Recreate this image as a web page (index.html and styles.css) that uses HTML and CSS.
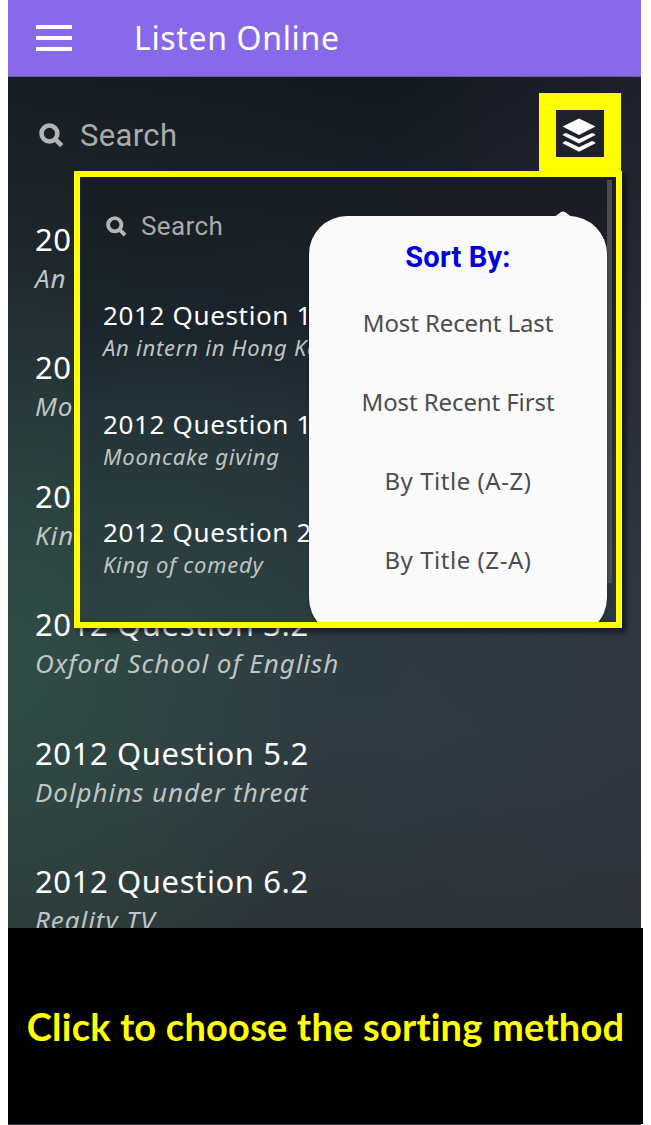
FILE: index.html
```html
<!DOCTYPE html>
<html lang="en">
<head>
<meta charset="utf-8">
<title>Listen Online</title>
<link rel="stylesheet" href="styles.css">
</head>
<body>
<main class="page">
  <section class="phone">
    <header class="topbar">
      <div class="menu"><span></span><span></span><span></span></div>
      <h1>Listen Online</h1>
    </header>
    <div class="search">
      <svg class="lens" viewBox="0 0 24 24"><circle cx="10" cy="10" r="7.6"/><path d="M15.5 15.5L21.8 21.8"/></svg>
      <span class="search-text">Search</span>
    </div>
    <ul class="list">
      <li><h2>2012 Question 1.1</h2><p>An intern in Hong Kong</p></li>
      <li><h2>2012 Question 1.2</h2><p>Mooncake giving</p></li>
      <li><h2>2012 Question 2.2</h2><p>King of comedy</p></li>
      <li><h2>2012 Question 3.2</h2><p>Oxford School of English</p></li>
      <li><h2>2012 Question 5.2</h2><p>Dolphins under threat</p></li>
      <li><h2>2012 Question 6.2</h2><p>Reality TV</p></li>
    </ul>
    <div class="sort-button">
      <svg class="layers" viewBox="0 0 34 34"><path d="M17 0.5L33.5 8.5L17 17L0.5 8.5Z"/><path d="M0.5 17Q0.5 16 4 14.9L17 21L30 14.9Q33.5 16 33.5 17L17 25.5Z"/><path d="M0.5 25.2Q0.5 24.2 4 23.1L17 29.2L30 23.1Q33.5 24.2 33.5 25.2L17 33.7Z"/></svg>
    </div>
    <section class="inset">
      <div class="search">
        <svg class="lens" viewBox="0 0 24 24"><circle cx="10" cy="10" r="7.6"/><path d="M15.5 15.5L21.8 21.8"/></svg>
        <span class="search-text">Search</span>
      </div>
      <ul class="list">
        <li><h2>2012 Question 1.1</h2><p>An intern in Hong Kong</p></li>
        <li><h2>2012 Question 1.2</h2><p>Mooncake giving</p></li>
        <li><h2>2012 Question 2.2</h2><p>King of comedy</p></li>
      </ul>
      <div class="scrollbar"></div>
      <svg class="pointer" viewBox="0 0 20 6"><path d="M0 6Q3 5 6 2.5Q10 -1.5 14 2.5Q17 5 20 6Z"/></svg>
      <div class="popup">
        <h3>Sort By:</h3>
        <div class="option">Most Recent Last</div>
        <div class="option">Most Recent First</div>
        <div class="option title-option">By Title (A-Z)</div>
        <div class="option title-option">By Title (Z-A)</div>
      </div>
    </section>
  </section>
  <footer class="caption"><span>Click to choose the sorting method</span></footer>
  <div class="edge"></div>
</main>
</body>
</html>
```
FILE: styles.css
```css
* { box-sizing: border-box; margin: 0; padding: 0; }
body { background: #fff; font-family: "Noto Sans", sans-serif; overflow: hidden; }
.page { width: 651px; height: 1125px; padding-left: 8px; overflow: hidden; }
h1, h2 { font-weight: 400; }
ul { list-style: none; }
.phone {
  position: relative; width: 633px; height: 928px; overflow: hidden;
  background:
    radial-gradient(ellipse 330px 400px at 0 660px, rgba(48,82,70,.75), rgba(48,82,70,0)),
    linear-gradient(90deg, rgba(40,60,50,.15), rgba(44,66,60,0) 60%, rgba(54,48,64,.3)),
    linear-gradient(180deg, #141920 77px, #1a2028 200px, #232c33 370px, #2d3a42 570px, #2f3b43 730px, #2d3539 928px);
}
.topbar {
  height: 77px; display: flex; align-items: center; background: #8769e9;
  border-bottom: 1px solid #6d57b7; padding-left: 28px;
}
.menu { width: 36px; display: grid; gap: 7px; }
.menu span { height: 4px; background: #fff; }
.topbar h1 { margin-left: 62px; color: #fff; font-size: 32px; line-height: 44px; letter-spacing: .65px; white-space: nowrap; }
.search { height: 117px; display: flex; align-items: center; padding-left: 31px; color: #aaa; }
.lens { width: 25px; height: 25px; fill: none; stroke: #b2b4b5; stroke-width: 4.4; }
.search-text { margin-left: 16px; font: 31px/40px Roboto, sans-serif; letter-spacing: .35px; }
.list { padding-left: 27px; white-space: nowrap; }
.list li { height: 128.4px; padding-top: 24px; }
.list h2 { color: #fff; font-size: 31px; line-height: 42px; letter-spacing: .6px; }
.list p { color: #bfc4c4; font-size: 26px; font-style: italic; line-height: 36px; letter-spacing: .95px; }
.sort-button {
  position: absolute; left: 531px; top: 93px; width: 82px; height: 80px;
  border: 17px solid #ff0; border-bottom-width: 16px; background: #20222b;
  display: flex; align-items: center; justify-content: center;
}
.layers { width: 34px; height: 34px; fill: #fff; margin: 2px 3px 0 0; }
.inset {
  position: absolute; left: 66px; top: 171px; width: 548px; height: 457px;
  border: 6px solid #ff0; overflow: hidden; box-shadow: 4px 4px 5px rgba(0,0,0,.55);
  background:
    radial-gradient(ellipse 260px 260px at 90px 430px, rgba(48,75,65,.45), rgba(48,75,65,0)),
    linear-gradient(90deg, rgba(35,60,60,.12), rgba(45,35,50,.25)),
    linear-gradient(180deg, #14191f, #1a232a 150px, #223037 250px, #2c3d44 445px);
}
.inset .search { height: 98px; padding-left: 26px; }
.inset .lens { width: 21px; height: 21px; }
.inset .search-text { margin-left: 14px; font-size: 26px; letter-spacing: .4px; }
.inset .list { padding-left: 23px; }
.inset .list li { height: 108.7px; padding-top: 22px; }
.inset .list h2 { font-size: 26px; line-height: 36px; letter-spacing: .65px; }
.inset .list p { font-size: 22px; line-height: 29px; letter-spacing: .75px; }
.scrollbar { position: absolute; left: 527px; top: 3px; width: 5px; height: 403px; background: #4b4c50; }
.pointer { position: absolute; left: 473px; top: 34px; width: 20px; height: 6px; fill: #fafafa; }
.popup {
  position: absolute; left: 229px; top: 39px; width: 298px; height: 420px;
  border-radius: 38px; background: #fafafa; box-shadow: 0 1px 3px rgba(0,0,0,.45);
  padding-top: 21px; text-align: center;
}
.popup h3 { color: #0000e0; font: 700 29px/40px Roboto, sans-serif; letter-spacing: .2px; }
.option { height: 79px; color: #4c4d4f; font-size: 24px; line-height: 92px; letter-spacing: -.1px; }
.title-option { letter-spacing: .55px; }
.caption {
  width: 635px; height: 196px; background: #000; color: #ff0;
  display: flex; align-items: center; justify-content: center;
  font: 700 38px/48px Lato, sans-serif; font-variant-ligatures: none; letter-spacing: .22px; white-space: nowrap;
}
.edge { width: 633px; height: 1px; background: #2d3339; }
```
